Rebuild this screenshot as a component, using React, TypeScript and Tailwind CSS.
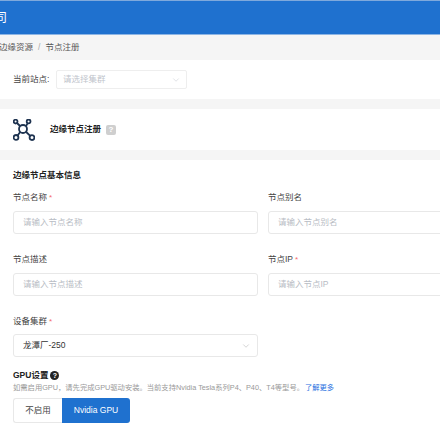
import React from 'react';
import { ChevronDown } from 'lucide-react';

const font = { fontFamily: '"Liberation Sans", "Noto Sans CJK SC", sans-serif' };

const Field: React.FC<{ label: string; required?: boolean; placeholder: string }> = ({ label, required, placeholder }) => (
  <div className="w-[245px] shrink-0">
    <div className="h-[17px] flex items-center text-[8.5px] text-[#444]">
      {label}
      {required && <span className="ml-[2px] text-[8px] text-[#f56c6c]">*</span>}
    </div>
    <div className="mt-[5px] h-[21px] box-content border border-[#e8e8e8] rounded-[3px] bg-white pl-[9px] flex items-center text-[8.5px] text-[#b8bcc4]">
      {placeholder}
    </div>
  </div>
);

const NodeIcon = () => (
  <svg width="22" height="22" viewBox="0 0 22 22" fill="none" stroke="#1e3350" strokeWidth="1.8">
    <circle cx="10" cy="10" r="4" />
    <circle cx="2.6" cy="2.6" r="1.9" />
    <circle cx="15.6" cy="2.4" r="1.9" />
    <circle cx="3" cy="18.4" r="2.4" />
    <circle cx="19" cy="18.6" r="2.4" />
    <path d="M4 4 7 7M14.8 4.1 13 7M7 13.2 4.6 16.6M13.2 13 17.2 16.8" />
  </svg>
);

const App: React.FC = () => {
  return (
    <div className="w-[440px] h-[440px] overflow-hidden bg-white" style={font}>
      <div className="h-[35px] bg-[#1f71cf] border-t border-t-[#7fa9dc] border-b border-b-[#8db5e4] flex items-center text-[12px] text-white">
        <span className="-ml-[5px]">司</span>
      </div>
      <div className="h-[25px] bg-[#f5f5f5] flex items-center text-[8.5px] text-[#555]">
        <span className="-ml-[1px]">边缘资源</span>
        <span className="mx-[5px] text-[#aaa]">/</span>
        <span>节点注册</span>
      </div>
      <div className="h-[39px] flex items-center pl-[13px]">
        <span className="text-[8.5px] text-[#444] w-[43px]">当前站点:</span>
        <div className="w-[118px] h-[17px] box-content border border-[#eeeeee] rounded-[2px] flex items-center justify-between pl-[6px] pr-[5px] text-[8.5px] text-[#c0c4cc]">
          请选择集群
          <ChevronDown size={10} strokeWidth={1.2} className="text-[#c0c4cc]" />
        </div>
      </div>
      <div className="h-[10px] bg-[#f5f5f5]" />
      <div className="h-[41px] flex items-center pl-[13px]">
        <NodeIcon />
        <span className="ml-[15px] text-[8.5px] font-bold text-[#222]">边缘节点注册</span>
        <span className="ml-[5px] w-[10px] h-[10px] rounded-[2px] bg-[#cfcfcf] text-white text-[8px] leading-[10px] text-center font-bold">?</span>
      </div>
      <div className="h-[10px] bg-[#f5f5f5]" />
      <div className="pl-[13px] pt-[8px]">
        <div className="h-[15px] flex items-center text-[8.5px] font-bold text-[#222]">边缘节点基本信息</div>
        <div className="mt-[6px] flex gap-[10px]">
          <Field label="节点名称" required placeholder="请输入节点名称" />
          <Field label="节点别名" placeholder="请输入节点别名" />
        </div>
        <div className="mt-[17px] flex gap-[10px]">
          <Field label="节点描述" placeholder="请输入节点描述" />
          <Field label="节点IP" required placeholder="请输入节点IP" />
        </div>
        <div className="mt-[17px] w-[245px]">
          <div className="h-[17px] flex items-center text-[8.5px] text-[#444]">
            设备集群<span className="ml-[2px] text-[8px] text-[#f56c6c]">*</span>
          </div>
          <div className="mt-[4px] h-[21px] box-content border border-[#e8e8e8] rounded-[3px] pl-[9px] pr-[6px] flex items-center justify-between text-[8.5px] text-[#333]">
            龙潭厂-250
            <ChevronDown size={10} strokeWidth={1.2} className="text-[#aaa]" />
          </div>
        </div>
        <div className="mt-[11px] h-[14px] flex items-center text-[8.5px] font-bold text-[#222]">
          GPU设置
          <span className="ml-[2px] w-[9px] h-[9px] rounded-full bg-[#222] text-white text-[7px] leading-[9px] text-center">?</span>
        </div>
        <div className="h-[13px] flex items-center text-[7.3px] text-[#999] whitespace-nowrap">
          如需启用GPU，请先完成GPU驱动安装。当前支持Nvidia Tesla系列P4、P40、T4等型号。
          <span className="ml-[1px] text-[#1f6fe0]">了解更多</span>
        </div>
        <div className="mt-[3px] flex h-[25px] w-[117px] text-[8.5px]">
          <div className="w-[49px] border border-[#e8e8e8] border-r-0 rounded-l-[3px] flex items-center justify-center text-[#444]">不启用</div>
          <div className="w-[68px] bg-[#1f71cf] rounded-r-[3px] flex items-center justify-center text-white">Nvidia GPU</div>
        </div>
      </div>
    </div>
  );
};

export default App;
